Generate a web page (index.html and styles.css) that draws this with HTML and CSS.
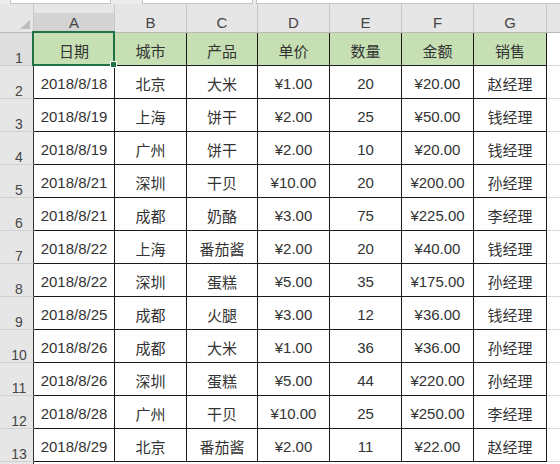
FILE: index.html
```html
<!DOCTYPE html>
<html lang="zh-CN">
<head>
<meta charset="utf-8">
<title>Sheet</title>
<link rel="stylesheet" href="styles.css">
</head>
<body>
<div class="toolbar">
  <div class="box box-name"></div>
  <div class="box box-fx"></div>
  <div class="box box-formula"></div>
</div>
<div class="sheet">
  <div class="corner"><span class="tri"></span></div>
  <div class="colh sel">A</div><div class="colh">B</div><div class="colh">C</div><div class="colh">D</div><div class="colh">E</div><div class="colh">F</div><div class="colh">G</div><div class="colh last"></div>

  <div class="rh sel">1</div>
  <div class="c hd active">日期<span class="selbox"></span><span class="handle"></span></div><div class="c hd">城市</div><div class="c hd">产品</div><div class="c hd">单价</div><div class="c hd">数量</div><div class="c hd">金额</div><div class="c hd">销售</div><div class="ghost"></div>

  <div class="rh">2</div>
  <div class="c">2018/8/18</div><div class="c">北京</div><div class="c">大米</div><div class="c">¥1.00</div><div class="c">20</div><div class="c">¥20.00</div><div class="c">赵经理</div><div class="ghost"></div>

  <div class="rh">3</div>
  <div class="c">2018/8/19</div><div class="c">上海</div><div class="c">饼干</div><div class="c">¥2.00</div><div class="c">25</div><div class="c">¥50.00</div><div class="c">钱经理</div><div class="ghost"></div>

  <div class="rh">4</div>
  <div class="c">2018/8/19</div><div class="c">广州</div><div class="c">饼干</div><div class="c">¥2.00</div><div class="c">10</div><div class="c">¥20.00</div><div class="c">钱经理</div><div class="ghost"></div>

  <div class="rh">5</div>
  <div class="c">2018/8/21</div><div class="c">深圳</div><div class="c">干贝</div><div class="c">¥10.00</div><div class="c">20</div><div class="c">¥200.00</div><div class="c">孙经理</div><div class="ghost"></div>

  <div class="rh">6</div>
  <div class="c">2018/8/21</div><div class="c">成都</div><div class="c">奶酪</div><div class="c">¥3.00</div><div class="c">75</div><div class="c">¥225.00</div><div class="c">李经理</div><div class="ghost"></div>

  <div class="rh">7</div>
  <div class="c">2018/8/22</div><div class="c">上海</div><div class="c">番茄酱</div><div class="c">¥2.00</div><div class="c">20</div><div class="c">¥40.00</div><div class="c">钱经理</div><div class="ghost"></div>

  <div class="rh">8</div>
  <div class="c">2018/8/22</div><div class="c">深圳</div><div class="c">蛋糕</div><div class="c">¥5.00</div><div class="c">35</div><div class="c">¥175.00</div><div class="c">孙经理</div><div class="ghost"></div>

  <div class="rh">9</div>
  <div class="c">2018/8/25</div><div class="c">成都</div><div class="c">火腿</div><div class="c">¥3.00</div><div class="c">12</div><div class="c">¥36.00</div><div class="c">钱经理</div><div class="ghost"></div>

  <div class="rh">10</div>
  <div class="c">2018/8/26</div><div class="c">成都</div><div class="c">大米</div><div class="c">¥1.00</div><div class="c">36</div><div class="c">¥36.00</div><div class="c">孙经理</div><div class="ghost"></div>

  <div class="rh">11</div>
  <div class="c">2018/8/26</div><div class="c">深圳</div><div class="c">蛋糕</div><div class="c">¥5.00</div><div class="c">44</div><div class="c">¥220.00</div><div class="c">孙经理</div><div class="ghost"></div>

  <div class="rh">12</div>
  <div class="c">2018/8/28</div><div class="c">广州</div><div class="c">干贝</div><div class="c">¥10.00</div><div class="c">25</div><div class="c">¥250.00</div><div class="c">李经理</div><div class="ghost"></div>

  <div class="rh">13</div>
  <div class="c">2018/8/29</div><div class="c">北京</div><div class="c">番茄酱</div><div class="c">¥2.00</div><div class="c">11</div><div class="c">¥22.00</div><div class="c">赵经理</div><div class="ghost"></div>

  <div class="rh tail"></div>
  <div class="tailrow"></div>
</div>
</body>
</html>
```

FILE: styles.css
```css
html, body {
  margin: 0;
  padding: 0;
  background: #ffffff;
  overflow: hidden;
}

body {
  width: 560px;
  height: 464px;
  font-family: "Liberation Sans", "Noto Sans CJK SC", sans-serif;
  color: #333333;
}

.toolbar {
  height: 4px;
  background: #ececec;
  display: flex;
}

.box {
  height: 4px;
  background: #ffffff;
  border: 1px solid #c6c6c6;
  border-top: none;
  box-sizing: border-box;
}

.box-name { margin-left: 10px; width: 101px; }
.box-fx { margin-left: 31px; width: 111px; }
.box-formula { margin-left: 3px; flex: 1; border-right: none; }

.sheet {
  display: grid;
  grid-template-columns: 34px 81px 72px 71px 72px 72px 72px 73px 1fr;
  grid-template-rows: 29px repeat(13, 33px) 1fr;
  height: 460px;
}

.corner {
  background: #e6e6e6;
  border-right: 1px solid #c8c8c8;
  border-bottom: 1px solid #b8b8b8;
  position: relative;
}

.tri {
  position: absolute;
  right: 3px;
  bottom: 3px;
  width: 0;
  height: 0;
  border-left: 10px solid transparent;
  border-bottom: 9px solid #bdbdbd;
}

.colh {
  background: #e6e6e6;
  border-right: 1px solid #c8c8c8;
  border-bottom: 1px solid #b8b8b8;
  display: flex;
  justify-content: center;
  align-items: flex-end;
  padding-bottom: 2px;
  box-sizing: border-box;
  font-family: "Liberation Sans", sans-serif;
  font-size: 15px;
  line-height: 15px;
  color: #444444;
}

.colh.sel {
  background: linear-gradient(#e6e6e6 0, #e6e6e6 9px, #d3d3d3 9px);
}

.colh.last {
  border-right: none;
}

.rh {
  background: #e6e6e6;
  border-right: 1px solid #333333;
  border-bottom: 1px solid #d0d0d0;
  display: flex;
  justify-content: center;
  align-items: flex-end;
  padding-left: 5px;
  box-sizing: border-box;
  font-family: "Liberation Sans", sans-serif;
  font-size: 14px;
  line-height: 14px;
  color: #454545;
}

.rh.sel {
  background: #dedede;
}

.rh.tail {
  border-bottom: none;
}

.c {
  border-right: 1px solid #1a1a1a;
  border-bottom: 1px solid #1a1a1a;
  display: flex;
  justify-content: center;
  align-items: center;
  padding-top: 3px;
  box-sizing: border-box;
  font-size: 15px;
  white-space: nowrap;
  background: #ffffff;
}

.c.hd {
  background: #c6e0b4;
}

.c.active {
  position: relative;
}

.selbox {
  position: absolute;
  left: -2px;
  top: -2px;
  right: -1px;
  bottom: -1px;
  border: 2px solid #217346;
  box-sizing: border-box;
  pointer-events: none;
}

.handle {
  position: absolute;
  right: -3px;
  bottom: -3px;
  width: 5px;
  height: 5px;
  background: #217346;
  border: 1px solid #ffffff;
  box-sizing: content-box;
}

.ghost {
  border-bottom: 1px solid #d9d9d9;
  background: #ffffff;
}

.tailrow {
  grid-column: 2 / -1;
  background: #ffffff;
}
```
